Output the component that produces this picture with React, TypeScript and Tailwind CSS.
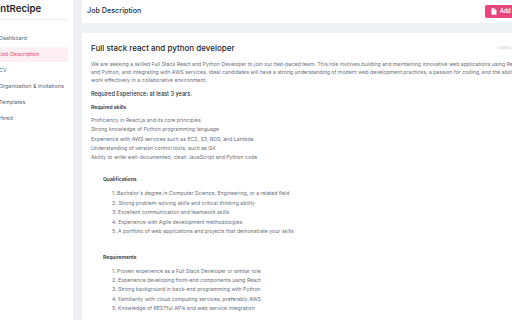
import React from "react";

const navItems = [
  "Dashboard",
  "Job Description",
  "CV",
  "Organization & Invitations",
  "Templates",
  "Hired",
];

const skills = [
  "Proficiency in React.js and its core principles",
  "Strong knowledge of Python programming language",
  "Experience with AWS services such as EC2, S3, RDS, and Lambda",
  "Understanding of version control tools, such as Git",
  "Ability to write well-documented, clean JavaScript and Python code",
];

const qualifications = [
  "Bachelor's degree in Computer Science, Engineering, or a related field",
  "Strong problem-solving skills and critical thinking ability",
  "Excellent communication and teamwork skills",
  "Experience with Agile development methodologies",
  "A portfolio of web applications and projects that demonstrate your skills",
];

const requirements = [
  "Proven experience as a Full Stack Developer or similar role",
  "Experience developing front-end components using React",
  "Strong background in back-end programming with Python",
  "Familiarity with cloud computing services, preferably AWS",
  "Knowledge of RESTful APIs and web service integration",
];

function FileIcon() {
  return (
    <svg width="6" height="7" viewBox="0 0 12 14" fill="none">
      <path d="M1 1.5A1 1 0 0 1 2 .5h5.5L11 4v8.5a1 1 0 0 1-1 1H2a1 1 0 0 1-1-1z" fill="white" />
      <path d="M7.5.5V4H11" stroke="#e8467c" strokeWidth="1" />
    </svg>
  );
}

export default function App() {
  return (
    <div className="w-[512px] h-[320px] overflow-hidden bg-[#eff0f3] font-['Inter',sans-serif]">
      <div className="flex h-full w-[620px]">
        <aside className="w-[90px] -ml-[15px] shrink-0 bg-white border-r border-[#e6e7eb]">
          <div className="mx-[6px] h-[20px] border-b border-[#f0f0f2] flex items-center overflow-hidden">
            <span className="-ml-[10px] text-[9.6px] font-semibold text-[#1f2328] whitespace-nowrap">
              TalentRecipe
            </span>
          </div>
          <nav className="px-[6px] pt-[11px] flex flex-col gap-[1px]">
            {navItems.map((item) => (
              <div
                key={item}
                className={
                  item === "Job Description"
                    ? "h-[15px] flex items-center px-[8px] rounded-[2px] bg-[#fdeff3] text-[#e3467a] text-[5.4px] whitespace-nowrap"
                    : "h-[15px] flex items-center px-[8px] text-[#60646b] text-[5.4px] whitespace-nowrap"
                }
              >
                {item}
              </div>
            ))}
          </nav>
        </aside>

        <main className="flex-1 pl-[7px] flex flex-col gap-[10px]">
          <header className="h-[23px] shrink-0 bg-white flex items-center pl-[5px]">
            <div className="w-[398px] text-[7.2px] font-medium text-[#2b2f36]">Job Description</div>
            <button className="h-[13px] px-[6px] flex items-center gap-[3px] rounded-[2px] bg-[#e8467c] text-white text-[5.5px] font-semibold whitespace-nowrap">
              <FileIcon />
              Add Job Description
            </button>
          </header>

          <section className="flex-1 bg-white pl-[9px] pt-[10px] whitespace-nowrap">
            <div className="flex items-center h-[10px]">
              <h1 className="w-[406px] text-[8px] font-medium text-[#1f2328]">
                Full stack react and python developer
              </h1>
              <span className="text-[4px] text-[#c4c7cc]">5 days ago</span>
            </div>

            <div className="mt-[7px] text-[5.2px] leading-[8px] text-[#6b7078]">
              <div>
                We are seeking a skilled Full Stack React and Python Developer to join our fast-paced team. This role involves building and maintaining innovative web applications using React
              </div>
              <div>
                and Python, and integrating with AWS services. Ideal candidates will have a strong understanding of modern web development practices, a passion for coding, and the ability to
              </div>
              <div>work effectively in a collaborative environment.</div>
            </div>

            <div className="mt-[6px] text-[5.6px] leading-[8px] font-medium text-[#2b2f36]">
              Required Experience: at least 3 years.
            </div>

            <div className="mt-[5px] text-[5px] leading-[8px] font-semibold text-[#2b2f36]">
              Required skills
            </div>

            <div className="mt-[5px] text-[5.2px] leading-[9.3px] text-[#6b7078]">
              {skills.map((s) => (
                <div key={s}>{s}</div>
              ))}
            </div>

            <div className="pl-[12px]">
              <div className="mt-[13px] text-[5px] leading-[8px] font-semibold text-[#2b2f36]">
                Qualifications
              </div>
              <ol className="mt-[6px] pl-[9px] text-[5.2px] leading-[9.4px] text-[#6b7078]">
                {qualifications.map((q, i) => (
                  <li key={q}>
                    {i + 1}. {q}
                  </li>
                ))}
              </ol>

              <div className="mt-[16px] text-[5px] leading-[8px] font-semibold text-[#2b2f36]">
                Requirements
              </div>
              <ol className="mt-[6px] pl-[9px] text-[5.2px] leading-[9.4px] text-[#6b7078]">
                {requirements.map((r, i) => (
                  <li key={r}>
                    {i + 1}. {r}
                  </li>
                ))}
              </ol>
            </div>
          </section>
        </main>
      </div>
    </div>
  );
}
